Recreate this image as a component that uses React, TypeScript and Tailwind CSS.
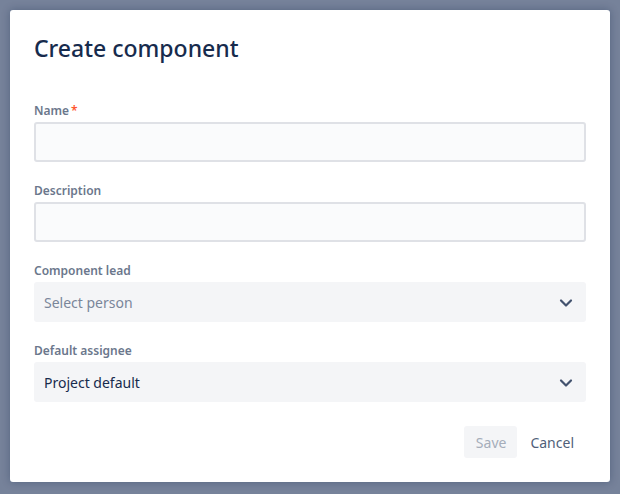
import React from 'react';

const ChevronDown = () => (
  <svg width="14" height="10" viewBox="0 0 14 10" className="text-[#42526e]">
    <path d="M2 2.5l5 5 5-5" fill="none" stroke="currentColor" strokeWidth="2.2" strokeLinecap="round" strokeLinejoin="round" />
  </svg>
);

const Label = ({ text, required }: { text: string; required?: boolean }) => (
  <label className="mb-[3px] flex h-[17px] items-end text-[12px] font-semibold leading-4 text-[#6b778c]">
    {text}
    {required && <span className="ml-0.5 text-[#ff5630]">*</span>}
  </label>
);

const TextField = ({ label, required }: { label: string; required?: boolean }) => (
  <div className="flex flex-col">
    <Label text={label} required={required} />
    <input className="h-10 w-full rounded-[3px] border-2 border-[#dfe1e6] bg-[#fafbfc] px-2 text-sm text-[#172b4d] outline-none" />
  </div>
);

const SelectField = ({ label, value, placeholder }: { label: string; value?: string; placeholder?: string }) => (
  <div className="flex flex-col">
    <Label text={label} />
    <div className="flex h-10 w-full items-center justify-between rounded-[3px] bg-[#f4f5f7] pl-2.5 pr-[13px] pt-px">
      <span className={value ? 'text-sm text-[#172b4d]' : 'text-sm text-[#7a869a]'}>{value ?? placeholder}</span>
      <ChevronDown />
    </div>
  </div>
);

export default function App() {
  return (
    <div
      className="flex h-[494px] w-[620px] items-start justify-start bg-[#76829a] pl-[10px] pt-[10px]"
      style={{ fontFamily: '"Noto Sans", sans-serif' }}
    >
      <div className="flex w-[600px] flex-col rounded-[3px] bg-white p-6 shadow-[0_0_8px_rgba(9,30,66,0.3)]">
        <h1 className="text-[23px] font-medium leading-7 text-[#172b4d]">Create component</h1>
        <div className="mt-10 flex flex-col gap-5">
          <TextField label="Name" required />
          <TextField label="Description" />
          <SelectField label="Component lead" placeholder="Select person" />
          <SelectField label="Default assignee" value="Project default" />
        </div>
        <div className="mt-6 flex justify-end">
          <button className="h-8 rounded-[3px] bg-[#f4f5f7] pb-px pl-3 pr-[11px] pt-0.5 text-sm text-[#a5adba]">Save</button>
          <button className="h-8 rounded-[3px] pb-px pl-[13px] pr-3 pt-0.5 text-sm text-[#505f79]">Cancel</button>
        </div>
      </div>
    </div>
  );
}
